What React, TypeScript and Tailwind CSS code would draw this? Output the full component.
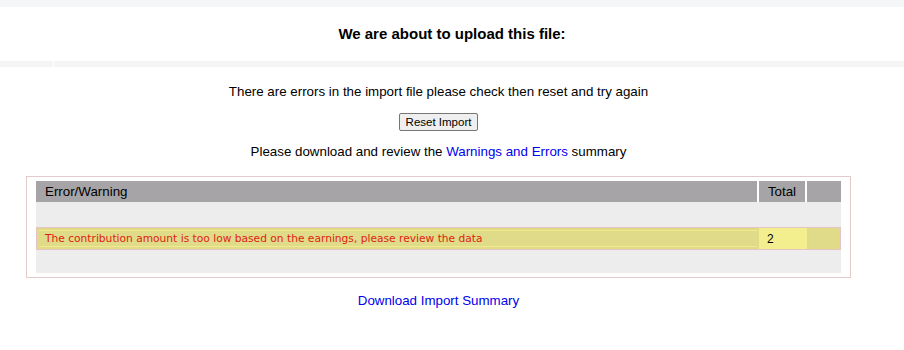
export default function App() {
  return (
    <div className="min-h-[350px] bg-white font-['Liberation_Sans',Arial,sans-serif] text-black">
      {/* Page header band */}
      <div className="h-[7px] bg-[#f5f6f8]" />
      <div className="flex h-[54px] items-center justify-center">
        <h2 className="text-[15px] font-bold">We are about to upload this file:</h2>
      </div>
      <div className="flex h-[6px]">
        <div className="w-[53px] bg-[#f4f4f4]" />
        <div className="w-px bg-white" />
        <div className="flex-1 bg-[#f4f4f4]" />
      </div>

      {/* Content */}
      <div className="w-[877px]">
        <p className="mt-[17px] text-center text-[13.33px] leading-[16px]">
          There are errors in the import file please check then reset and try again
        </p>
        <div className="mt-[13px] flex justify-center">
          <button className="h-[18px] rounded-[2px] border border-[#767676] bg-[#efefef] px-[6px] text-[11.5px] leading-[14px]">
            Reset Import
          </button>
        </div>
        <p className="mt-[13px] text-center text-[13.33px] leading-[16px]">
          Please download and review the{' '}
          <a className="text-[#0000ee]">Warnings and Errors</a> summary
        </p>

        <div className="mx-[26px] mt-[16px] border border-[#e4caca] px-[9px] py-[4px]">
          <table className="w-full border-separate border-spacing-0">
            <thead>
              <tr className="bg-[#a6a4a6] text-[13.33px]">
                <th className="h-[21px] border-r-2 border-white pl-[9px] text-left font-normal">
                  Error/Warning
                </th>
                <th className="w-[48px] border-r-2 border-white text-center font-normal">Total</th>
                <th className="w-[34px]" />
              </tr>
            </thead>
            <tbody>
              <tr className="bg-[#ededed]">
                <td className="h-[25px]" colSpan={3} />
              </tr>
              <tr className="bg-[#e0db88]">
                <td className="h-[23px] border-y border-l border-[#e6c4c4] px-[2px] py-[2px]">
                  <div className="flex h-full items-center bg-[#e0db88] pl-[6px] font-['DejaVu_Sans',Verdana,sans-serif] text-[10.67px] text-[#e01b12] shadow-[inset_0_1px_0_#f1eb8e,inset_0_-1px_0_#f1eb8e]">
                    The contribution amount is too low based on the earnings, please review the data
                  </div>
                </td>
                <td className="border-y border-[#e6c4c4] bg-[#f3ee8e] pl-[8px] text-left text-[12px]">
                  2
                </td>
                <td className="border-y border-r border-[#e6c4c4] pl-[6px]">
                  <div className="h-[19px] w-[22px] bg-[#e0db88]" />
                </td>
              </tr>
              <tr className="bg-[#ededed]">
                <td className="h-[23px]" colSpan={3} />
              </tr>
            </tbody>
          </table>
        </div>

        <p className="mt-[15px] text-center text-[13.33px] leading-[16px]">
          <a className="text-[#0000ee]">Download Import Summary</a>
        </p>
      </div>
    </div>
  );
}
